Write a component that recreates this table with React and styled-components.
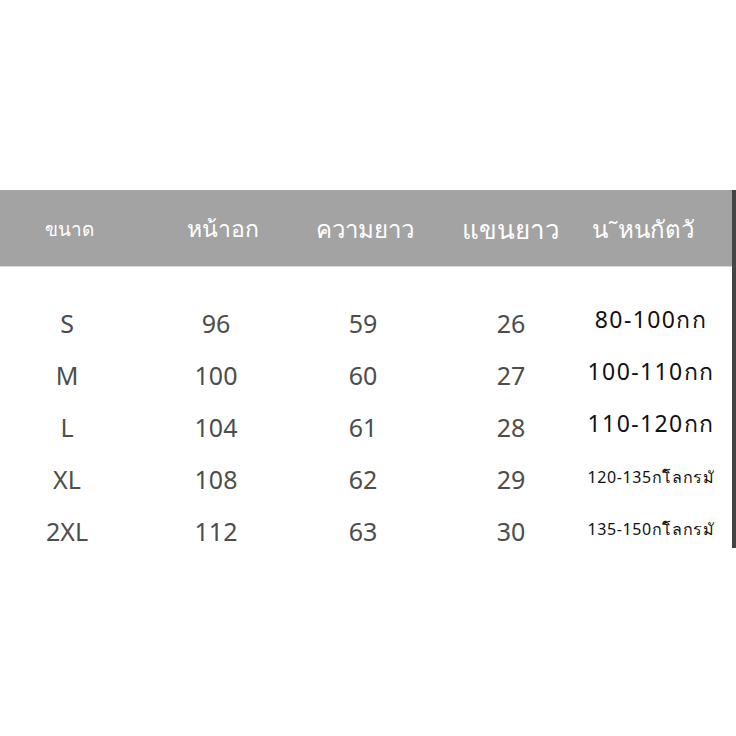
import React from 'react'
import styled, { createGlobalStyle } from 'styled-components'

const GlobalStyle = createGlobalStyle`
  html, body {
    margin: 0;
    padding: 0;
    background: #fff;
  }
  body {
    font-family: "Noto Sans", "Liberation Sans", sans-serif;
  }
`

const rows = [
  { size: 'S', chest: '96', length: '59', sleeve: '26', weight: '80-100กก', small: false },
  { size: 'M', chest: '100', length: '60', sleeve: '27', weight: '100-110กก', small: false },
  { size: 'L', chest: '104', length: '61', sleeve: '28', weight: '110-120กก', small: false },
  { size: 'XL', chest: '108', length: '62', sleeve: '29', weight: '120-135กโิลกรมั', small: true },
  { size: '2XL', chest: '112', length: '63', sleeve: '30', weight: '135-150กโิลกรมั', small: true },
]

export default () => (
  <Page>
    <GlobalStyle />
    <Frame>
      <Chart>
        <Head>
          <HeadCell $size="19px" $left="4px">ขนาด</HeadCell>
          <HeadCell $size="23px" $left="14px">หน้าอก</HeadCell>
          <HeadCell $size="24px" $left="4px">ความยาว</HeadCell>
          <HeadCell $size="26px">แขนยาว</HeadCell>
          <WeightHead>น˜หนกัตวั</WeightHead>
        </Head>
        <Body>
          {rows.map((r) => (
            <Row key={r.size}>
              <Cell>{r.size}</Cell>
              <Cell>{r.chest}</Cell>
              <Cell>{r.length}</Cell>
              <Cell>{r.sleeve}</Cell>
              <Weight $small={r.small}>{r.weight}</Weight>
            </Row>
          ))}
        </Body>
      </Chart>
      <Edge />
    </Frame>
  </Page>
)

const Page = styled.div`
  width: 736px;
  height: 736px;
  padding-top: 190px;
  box-sizing: border-box;
  background: #fff;
`

const Frame = styled.div`
  display: flex;
  align-items: flex-start;
`

const Chart = styled.div`
  flex: 1;
  min-width: 0;
`

const Edge = styled.div`
  flex: 0 0 4px;
  height: 358px;
  background: #444;
`

const columns = `
  display: grid;
  grid-template-columns: 134px 164px 130px 166px minmax(0, 1fr);
  align-items: center;
  justify-items: center;
`

const Head = styled.div`
  ${columns}
  height: 76px;
  background: #a3a3a3;
  border-bottom: 1px solid #d8d8d8;
`

const HeadCell = styled.div`
  color: #fff;
  font-size: ${(p) => p.$size};
  padding-left: ${(p) => p.$left || '0'};
  padding-top: 2px;
  white-space: nowrap;
`

const WeightHead = styled.div`
  justify-self: stretch;
  margin-left: -40px;
  color: #fff;
  font-size: 24px;
  text-align: center;
  padding-top: 2px;
  white-space: nowrap;
`

const Body = styled.div`
  padding-top: 30px;
`

const Row = styled.div`
  ${columns}
  height: 52px;
`

const Cell = styled.div`
  color: #4d4d4d;
  font-size: 25px;
`

const Weight = styled.div`
  justify-self: stretch;
  margin-left: -24px;
  text-align: center;
  color: #111;
  font-size: ${(p) => (p.$small ? '16px' : '23px')};
  letter-spacing: ${(p) => (p.$small ? '0.6px' : '1.4px')};
  padding-bottom: ${(p) => (p.$small ? '4px' : '6px')};
  white-space: nowrap;
`
